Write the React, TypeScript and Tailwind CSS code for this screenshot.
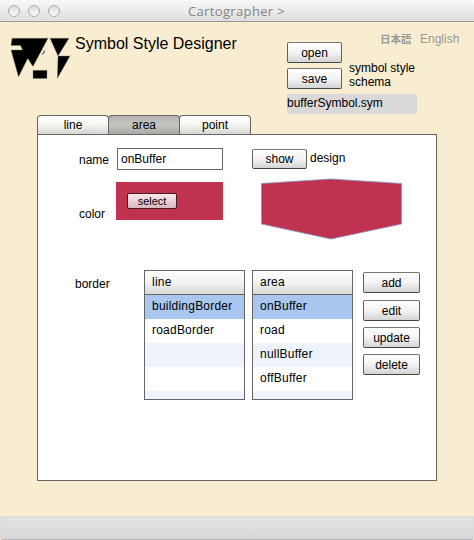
import React from "react";

const BUTTON =
  "flex shrink-0 items-center justify-center rounded-[2px] border border-[#5f5f5f] border-t-[#777] border-b-[#444] bg-linear-to-b from-white via-[#f4f4f4] to-[#d4d4d4] whitespace-nowrap";

function Button({ label, className }: { label: string; className: string }) {
  return <button className={`${BUTTON} ${className}`}>{label}</button>;
}

function Logo() {
  return (
    <svg className="ml-[10px] mt-[15px] h-[43px] w-[61px] shrink-0" viewBox="10 37 61 43">
      <g fill="#000" stroke="#8f8b86" strokeWidth="0.4">
        <path d="M12 38.3H48L33 66.5L27.7 58.5L18.5 77L11 50H22.5L20.5 45.5H11Z" />
        <path d="M50 38.3H69L58 56Z" />
        <path d="M58 56H70L57.3 78.5Z" />
        <path d="M33 70.3H47V78.5H33Z" />
      </g>
      <path d="M44.2 50.5Q45.5 53 41.8 54.2" fill="none" stroke="#333" strokeWidth="1" />
    </svg>
  );
}

function Tab({ label, active, className }: { label: string; active?: boolean; className: string }) {
  return (
    <button
      className={`flex h-[19px] items-center justify-center rounded-t-[4px] border border-b-0 border-[#666] ${
        active
          ? "bg-linear-to-b from-[#b2b2b0] via-[#c4c4c1] to-[#a9a9a6]"
          : "bg-linear-to-b from-white via-[#f4f4f0] to-[#d5d5d1]"
      } ${className}`}
    >
      {label}
    </button>
  );
}

function Table({ title, rows }: { title: string; rows: string[] }) {
  return (
    <div className="h-[130px] w-[101px] shrink-0 overflow-hidden border border-[#666] tracking-[0.22px]">
      <div className="h-[24px] border-b border-[#666] bg-linear-to-b from-white via-[#f4f4f4] to-[#d7d7d7] pl-[7px] leading-[22px]">
        {title}
      </div>
      {rows.map((row, i) => (
        <div
          key={i}
          className={`h-[24px] pl-[7px] leading-[22px] ${
            i === 0 ? "bg-[#a8c6ee]" : i % 2 === 0 ? "bg-[#eef3fb]" : "bg-white"
          }`}
        >
          {row}
        </div>
      ))}
    </div>
  );
}

export default function App() {
  return (
    <div className="flex h-[540px] w-[474px] flex-col overflow-hidden bg-[#f8edd0] font-['Liberation_Sans','Noto_Sans_CJK_JP',sans-serif] text-[12px] leading-[14px] text-black">
      <div className="bg-white">
        <div className="flex h-[22px] items-center rounded-t-[4px] border-b border-[#999] bg-linear-to-b from-[#f8f8f8] to-[#dedede]">
          <div className="ml-[8px] flex w-[180px] gap-[8px]">
            <i className="size-[12px] rounded-full border border-[#aaa] bg-linear-to-b from-[#dedede] to-[#fafafa]" />
            <i className="size-[12px] rounded-full border border-[#aaa] bg-linear-to-b from-[#dedede] to-[#fafafa]" />
            <i className="size-[12px] rounded-full border border-[#aaa] bg-linear-to-b from-[#dedede] to-[#fafafa]" />
          </div>
          <span className="whitespace-nowrap font-['Open_Sans',sans-serif] text-[13px] tracking-[0.35px] text-[#858585]">
            Cartographer &gt;
          </span>
        </div>
      </div>

      <header className="flex h-[93px] shrink-0">
        <Logo />
        <h1 className="ml-[4px] mt-[12px] w-[212px] text-[16px] leading-[20px]">Symbol Style Designer</h1>
        <div className="mt-[20px] w-[92px] shrink-0">
          <Button label="open" className="h-[21px] w-[55px]" />
          <Button label="save" className="mt-[5px] h-[21px] w-[55px]" />
          <div className="mt-[5px] h-[20px] w-[130px] bg-[#d9d9d9] leading-[18px]">bufferSymbol.sym</div>
        </div>
        <div className="-ml-[30px] w-[112px] shrink-0">
          <nav className="ml-[31px] mt-[10px] flex gap-[9px] whitespace-nowrap text-[#999]">
            <span className="w-[31px] font-['Noto_Sans_CJK_JP',sans-serif] text-[10.5px] font-bold">日本語</span>
            <span>English</span>
          </nav>
          <p className="mt-[15px]">
            symbol style
            <br />
            schema
          </p>
        </div>
      </header>

      <main className="ml-[37px] w-[400px] shrink-0">
        <div className="flex h-[19px]">
          <Tab label="line" className="w-[72px]" />
          <Tab label="area" active className="-ml-px w-[72px]" />
          <Tab label="point" className="-ml-px w-[72px]" />
        </div>
        <section className="h-[347px] border border-[#666] bg-white">
          <div className="flex h-[135px]">
            <div className="ml-[41px] w-[37px] pt-[18px]">
              <div>name</div>
              <div className="mt-[40px]">color</div>
            </div>
            <div className="w-[107px] pt-[13px]">
              <div className="ml-px h-[22px] border border-[#666] pl-[3px] leading-[20px]">onBuffer</div>
              <div className="mt-[12px] h-[38px] bg-[#bf3350] pl-[11px] pt-[11px]">
                <button className="flex h-[16px] w-[50px] items-center justify-center rounded-[2px] border border-[#4d1922] bg-linear-to-b from-[#f8e9ec] to-[#d7b8c0] text-[11px]">
                  select
                </button>
              </div>
            </div>
            <div className="ml-[29px] pt-[14px]">
              <div className="flex gap-[3px]">
                <Button label="show" className="h-[20px] w-[55px]" />
                <span className="mt-[2px]">design</span>
              </div>
              <svg className="ml-[9px] mt-[9px] h-[62px] w-[142px]" viewBox="0 0 142 62">
                <path d="M.5 5.5L70 1L140.5 5.5V46L70 61L.5 46Z" fill="#bf3350" stroke="#8795c4" strokeWidth=".8" />
              </svg>
            </div>
          </div>
          <div className="flex">
            <div className="ml-[37px] w-[69px] pt-[7px]">border</div>
            <div className="flex gap-[7px]">
              <Table title="line" rows={["buildingBorder", "roadBorder", "", "", ""]} />
              <Table title="area" rows={["onBuffer", "road", "nullBuffer", "offBuffer", ""]} />
            </div>
            <div className="ml-[10px] pt-[2px]">
              <Button label="add" className="h-[21px] w-[57px]" />
              <Button label="edit" className="mt-[7px] h-[21px] w-[57px]" />
              <Button label="update" className="mt-[6px] h-[21px] w-[57px]" />
              <Button label="delete" className="mt-[6px] h-[21px] w-[57px]" />
            </div>
          </div>
        </section>
      </main>

      <footer className="mt-auto h-[24px] rounded-b-[3px] border border-[#dcdcdc] border-b-[#b5b5b5] bg-linear-to-b from-[#e2e2e2] to-[#d7d7d7]" />
    </div>
  );
}
